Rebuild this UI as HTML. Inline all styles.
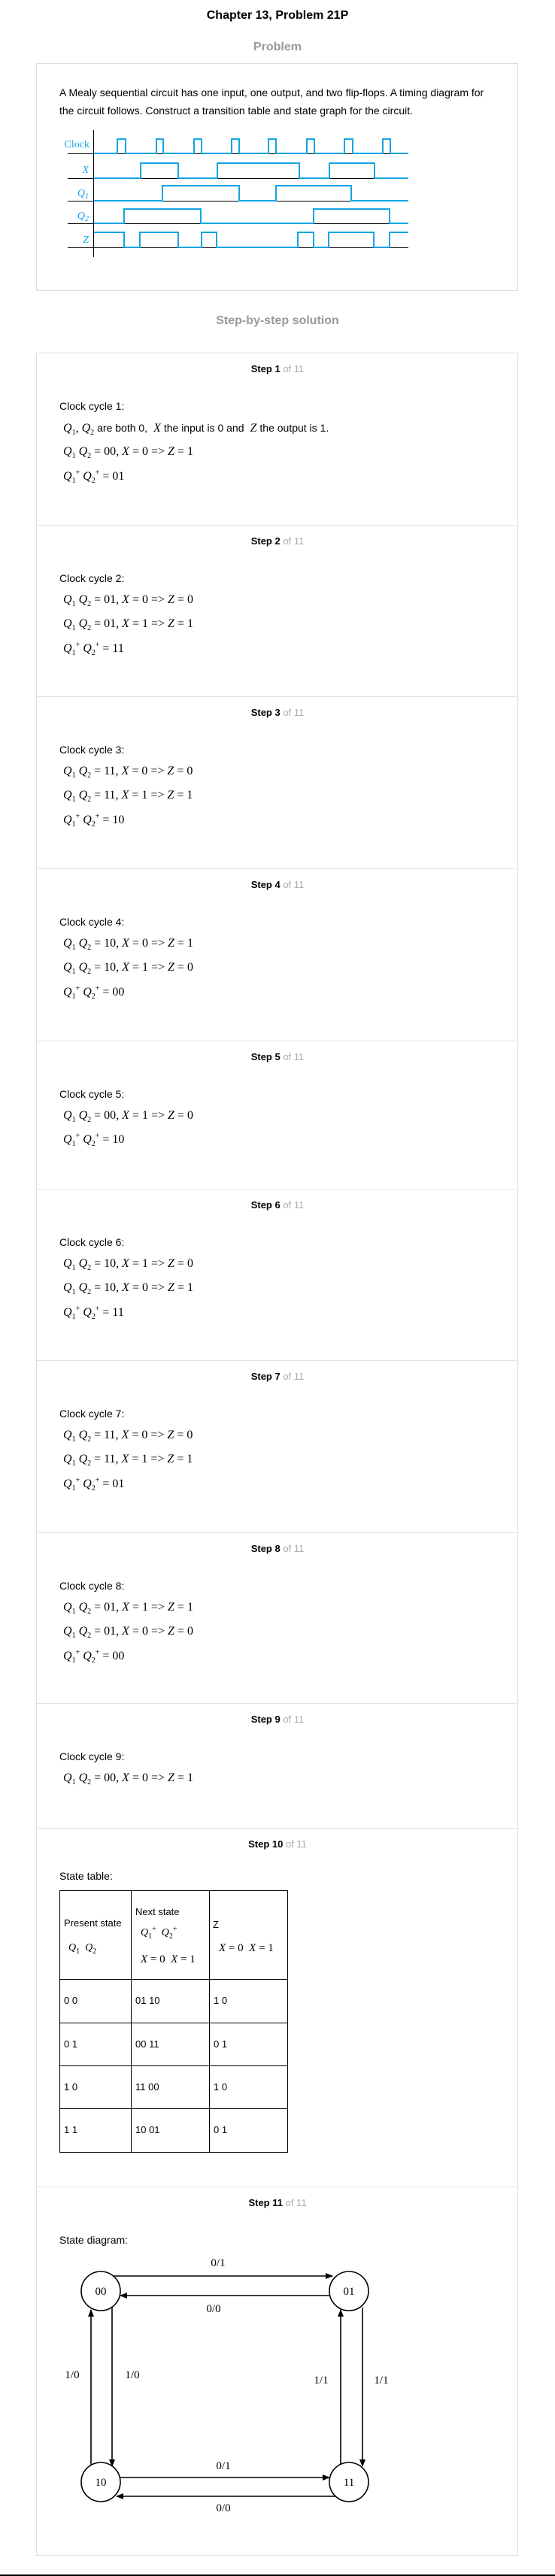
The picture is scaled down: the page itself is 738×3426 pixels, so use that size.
<!DOCTYPE html>
<html><head><meta charset="utf-8">
<style>
html,body{margin:0;padding:0;background:#fff;}
body{width:738px;height:3426px;position:relative;overflow:hidden;font-family:"Liberation Sans",Arial,sans-serif;color:#000;}
.a{position:absolute;white-space:nowrap;line-height:18px;}
.h{font-weight:bold;font-size:16px;left:0;width:738px;text-align:center;}
.st{font-weight:bold;font-size:13px;left:0;width:738px;text-align:center;}
.st span{font-weight:normal;color:#aaa;}
.t{font-size:14px;left:79px;}
.m{font-family:"Liberation Serif","Times New Roman",serif;font-size:16px;left:84px;}
.m i{font-style:italic;}
.m sub,.m sup{font-size:10px;line-height:0;}
.box{position:absolute;border:1px solid #ddd;box-sizing:border-box;}
.sep{position:absolute;left:49px;width:638px;height:1px;background:#e2e2e2;}
.tc{font-size:13px;}
.vl{position:absolute;width:1px;background:#000;}
.hl{position:absolute;height:1px;background:#000;}
</style></head><body>

<div class="a h" style="top:12px;">Chapter 13, Problem 21P</div>
<div class="a h" style="top:54px;color:#999;">Problem</div>
<div class="box" style="left:48px;top:84px;width:641px;height:303px;"></div>
<div class="a t" style="top:114px;font-size:14px;">A Mealy sequential circuit has one input, one output, and two flip-flops. A timing diagram for</div>
<div class="a t" style="top:138px;font-size:14px;">the circuit follows. Construct a transition table and state graph for the circuit.</div>

<svg style="position:absolute;left:0;top:0;" width="738" height="400">
<g font-family="Liberation Serif,serif" font-size="14" fill="#12a5e4" text-anchor="end">
<text x="119" y="196">Clock</text>
<text x="118" y="230" font-style="italic">X</text>
<text x="118" y="261" font-style="italic">Q<tspan font-size="10" dy="3">1</tspan></text>
<text x="118" y="291" font-style="italic">Q<tspan font-size="10" dy="3">2</tspan></text>
<text x="118" y="323" font-style="italic">Z</text>
</g>
<g stroke="#000" stroke-width="1">
<line x1="124.5" y1="173" x2="124.5" y2="342"/>
<line x1="90" y1="204.5" x2="543" y2="204.5"/>
<line x1="90" y1="237.5" x2="543" y2="237.5"/>
<line x1="90" y1="267.5" x2="543" y2="267.5"/>
<line x1="90" y1="297.5" x2="543" y2="297.5"/>
<line x1="90" y1="329.5" x2="543" y2="329.5"/>
</g>
<g stroke="#12a5e4" stroke-width="2" fill="none">
<path d="M125 204 H156 V185 H167 V204 H208 V185 H217 V204 H258 V185 H268 V204 H308 V185 H318 V204 H357 V185 H367 V204 H408 V185 H418 V204 H458 V185 H469 V204 H509 V185 H519 V204 H543"/>
<path d="M125 237 H187 V217 H237 V237 H289 V217 H398 V237 H438 V217 H498 V237 H543"/>
<path d="M125 267 H216 V247 H318 V267 H367 V247 H467 V267 H543"/>
<path d="M125 297 H165 V278 H267 V297 H417 V278 H518 V297 H543"/>
<path d="M125 309 H165 V329 H186 V309 H237 V329 H268 V309 H288 V329 H396 V309 H417 V329 H437 V309 H497 V329 H518 V309 H543"/>
</g>
</svg>

<div class="a h" style="top:418px;color:#999;">Step-by-step solution</div>
<div class="box" style="left:48px;top:469px;width:641px;height:2930px;"></div>

<!-- Step 1 -->
<div class="a st" style="top:482px;">Step 1 <span>of 11</span></div>
<div class="a t" style="top:531px;">Clock cycle 1:</div>
<div class="a m" style="top:560px;"><i>Q</i><sub>1</sub>, <i>Q</i><sub>2</sub> <span style="font-family:'Liberation Sans',sans-serif;font-size:14px;">are both 0,</span> &nbsp;<i>X</i> <span style="font-family:'Liberation Sans',sans-serif;font-size:14px;">the input is 0 and</span> &nbsp;<i>Z</i> <span style="font-family:'Liberation Sans',sans-serif;font-size:14px;">the output is 1.</span></div>
<div class="a m" style="top:592px;"><i>Q</i><sub>1</sub> <i>Q</i><sub>2</sub> = 00, <i>X</i> = 0 =&gt; <i>Z</i> = 1</div>
<div class="a m" style="top:625px;"><i>Q</i><sub>1</sub><sup>+</sup> <i>Q</i><sub>2</sub><sup>+</sup> = 01</div>

<div class="sep" style="top:698px;"></div>
<!-- Step 2 -->
<div class="a st" style="top:711px;">Step 2 <span>of 11</span></div>
<div class="a t" style="top:760px;">Clock cycle 2:</div>
<div class="a m" style="top:789px;"><i>Q</i><sub>1</sub> <i>Q</i><sub>2</sub> = 01, <i>X</i> = 0 =&gt; <i>Z</i> = 0</div>
<div class="a m" style="top:821px;"><i>Q</i><sub>1</sub> <i>Q</i><sub>2</sub> = 01, <i>X</i> = 1 =&gt; <i>Z</i> = 1</div>
<div class="a m" style="top:854px;"><i>Q</i><sub>1</sub><sup>+</sup> <i>Q</i><sub>2</sub><sup>+</sup> = 11</div>

<div class="sep" style="top:926px;"></div>
<!-- Step 3 -->
<div class="a st" style="top:939px;">Step 3 <span>of 11</span></div>
<div class="a t" style="top:988px;">Clock cycle 3:</div>
<div class="a m" style="top:1017px;"><i>Q</i><sub>1</sub> <i>Q</i><sub>2</sub> = 11, <i>X</i> = 0 =&gt; <i>Z</i> = 0</div>
<div class="a m" style="top:1049px;"><i>Q</i><sub>1</sub> <i>Q</i><sub>2</sub> = 11, <i>X</i> = 1 =&gt; <i>Z</i> = 1</div>
<div class="a m" style="top:1082px;"><i>Q</i><sub>1</sub><sup>+</sup> <i>Q</i><sub>2</sub><sup>+</sup> = 10</div>

<div class="sep" style="top:1155px;"></div>
<!-- Step 4 -->
<div class="a st" style="top:1168px;">Step 4 <span>of 11</span></div>
<div class="a t" style="top:1217px;">Clock cycle 4:</div>
<div class="a m" style="top:1246px;"><i>Q</i><sub>1</sub> <i>Q</i><sub>2</sub> = 10, <i>X</i> = 0 =&gt; <i>Z</i> = 1</div>
<div class="a m" style="top:1278px;"><i>Q</i><sub>1</sub> <i>Q</i><sub>2</sub> = 10, <i>X</i> = 1 =&gt; <i>Z</i> = 0</div>
<div class="a m" style="top:1311px;"><i>Q</i><sub>1</sub><sup>+</sup> <i>Q</i><sub>2</sub><sup>+</sup> = 00</div>

<div class="sep" style="top:1384px;"></div>
<!-- Step 5 -->
<div class="a st" style="top:1397px;">Step 5 <span>of 11</span></div>
<div class="a t" style="top:1446px;">Clock cycle 5:</div>
<div class="a m" style="top:1475px;"><i>Q</i><sub>1</sub> <i>Q</i><sub>2</sub> = 00, <i>X</i> = 1 =&gt; <i>Z</i> = 0</div>
<div class="a m" style="top:1507px;"><i>Q</i><sub>1</sub><sup>+</sup> <i>Q</i><sub>2</sub><sup>+</sup> = 10</div>

<div class="sep" style="top:1581px;"></div>
<!-- Step 6 -->
<div class="a st" style="top:1594px;">Step 6 <span>of 11</span></div>
<div class="a t" style="top:1643px;">Clock cycle 6:</div>
<div class="a m" style="top:1672px;"><i>Q</i><sub>1</sub> <i>Q</i><sub>2</sub> = 10, <i>X</i> = 1 =&gt; <i>Z</i> = 0</div>
<div class="a m" style="top:1704px;"><i>Q</i><sub>1</sub> <i>Q</i><sub>2</sub> = 10, <i>X</i> = 0 =&gt; <i>Z</i> = 1</div>
<div class="a m" style="top:1737px;"><i>Q</i><sub>1</sub><sup>+</sup> <i>Q</i><sub>2</sub><sup>+</sup> = 11</div>

<div class="sep" style="top:1809px;"></div>
<!-- Step 7 -->
<div class="a st" style="top:1822px;">Step 7 <span>of 11</span></div>
<div class="a t" style="top:1871px;">Clock cycle 7:</div>
<div class="a m" style="top:1900px;"><i>Q</i><sub>1</sub> <i>Q</i><sub>2</sub> = 11, <i>X</i> = 0 =&gt; <i>Z</i> = 0</div>
<div class="a m" style="top:1932px;"><i>Q</i><sub>1</sub> <i>Q</i><sub>2</sub> = 11, <i>X</i> = 1 =&gt; <i>Z</i> = 1</div>
<div class="a m" style="top:1965px;"><i>Q</i><sub>1</sub><sup>+</sup> <i>Q</i><sub>2</sub><sup>+</sup> = 01</div>

<div class="sep" style="top:2038px;"></div>
<!-- Step 8 -->
<div class="a st" style="top:2051px;">Step 8 <span>of 11</span></div>
<div class="a t" style="top:2100px;">Clock cycle 8:</div>
<div class="a m" style="top:2129px;"><i>Q</i><sub>1</sub> <i>Q</i><sub>2</sub> = 01, <i>X</i> = 1 =&gt; <i>Z</i> = 1</div>
<div class="a m" style="top:2161px;"><i>Q</i><sub>1</sub> <i>Q</i><sub>2</sub> = 01, <i>X</i> = 0 =&gt; <i>Z</i> = 0</div>
<div class="a m" style="top:2194px;"><i>Q</i><sub>1</sub><sup>+</sup> <i>Q</i><sub>2</sub><sup>+</sup> = 00</div>

<div class="sep" style="top:2265px;"></div>
<!-- Step 9 -->
<div class="a st" style="top:2278px;">Step 9 <span>of 11</span></div>
<div class="a t" style="top:2327px;">Clock cycle 9:</div>
<div class="a m" style="top:2356px;"><i>Q</i><sub>1</sub> <i>Q</i><sub>2</sub> = 00, <i>X</i> = 0 =&gt; <i>Z</i> = 1</div>

<div class="sep" style="top:2431px;"></div>
<!-- Step 10 -->
<div class="a st" style="top:2444px;">Step 10 <span>of 11</span></div>
<div class="a t" style="top:2486px;">State table:</div>

<div class="hl" style="left:79px;width:304px;top:2514px;"></div>
<div class="hl" style="left:79px;width:304px;top:2632px;"></div>
<div class="hl" style="left:79px;width:304px;top:2690px;"></div>
<div class="hl" style="left:79px;width:304px;top:2747px;"></div>
<div class="hl" style="left:79px;width:304px;top:2804px;"></div>
<div class="hl" style="left:79px;width:304px;top:2862px;"></div>
<div class="vl" style="left:79px;top:2514px;height:349px;"></div>
<div class="vl" style="left:174px;top:2514px;height:349px;"></div>
<div class="vl" style="left:278px;top:2514px;height:349px;"></div>
<div class="vl" style="left:382px;top:2514px;height:349px;"></div>

<div class="a tc" style="left:85px;top:2549px;">Present state</div>
<div class="a m" style="left:91px;top:2582px;font-size:14px;"><i>Q</i><sub>1</sub>&nbsp; <i>Q</i><sub>2</sub></div>
<div class="a tc" style="left:180px;top:2534px;">Next state</div>
<div class="a m" style="left:187px;top:2562px;font-size:14px;"><i>Q</i><sub>1</sub><sup>+</sup>&nbsp; <i>Q</i><sub>2</sub><sup>+</sup></div>
<div class="a m" style="left:187px;top:2597px;font-size:15px;"><i>X</i> = 0 &nbsp;<i>X</i> = 1</div>
<div class="a tc" style="left:283px;top:2551px;">Z</div>
<div class="a m" style="left:291px;top:2582px;font-size:15px;"><i>X</i> = 0 &nbsp;<i>X</i> = 1</div>

<div class="a tc" style="left:85px;top:2652px;">0 0</div>
<div class="a tc" style="left:180px;top:2652px;">01 10</div>
<div class="a tc" style="left:284px;top:2652px;">1 0</div>
<div class="a tc" style="left:85px;top:2710px;">0 1</div>
<div class="a tc" style="left:180px;top:2710px;">00 11</div>
<div class="a tc" style="left:284px;top:2710px;">0 1</div>
<div class="a tc" style="left:85px;top:2767px;">1 0</div>
<div class="a tc" style="left:180px;top:2767px;">11 00</div>
<div class="a tc" style="left:284px;top:2767px;">1 0</div>
<div class="a tc" style="left:85px;top:2824px;">1 1</div>
<div class="a tc" style="left:180px;top:2824px;">10 01</div>
<div class="a tc" style="left:284px;top:2824px;">0 1</div>

<div class="sep" style="top:2908px;"></div>
<!-- Step 11 -->
<div class="a st" style="top:2921px;">Step 11 <span>of 11</span></div>
<div class="a t" style="top:2970px;">State diagram:</div>

<svg style="position:absolute;left:0;top:2900px;" width="738" height="500">
<defs>
<marker id="ar" markerWidth="10" markerHeight="8" refX="9" refY="4" orient="auto" markerUnits="userSpaceOnUse">
<path d="M0 0 L10 4 L0 8 Z" fill="#000"/>
</marker>
</defs>
<g stroke="#000" stroke-width="1.6" fill="none">
<circle cx="134" cy="147" r="26"/>
<circle cx="464" cy="147" r="26"/>
<circle cx="134" cy="401" r="26"/>
<circle cx="464" cy="401" r="26"/>
<line x1="150" y1="127" x2="442" y2="127" marker-end="url(#ar)"/>
<line x1="439" y1="153" x2="160" y2="153" marker-end="url(#ar)"/>
<line x1="121" y1="378" x2="121" y2="172" marker-end="url(#ar)"/>
<line x1="149" y1="169" x2="149" y2="380" marker-end="url(#ar)"/>
<line x1="453" y1="378" x2="453" y2="172" marker-end="url(#ar)"/>
<line x1="482" y1="169" x2="482" y2="380" marker-end="url(#ar)"/>
<line x1="160" y1="395" x2="438" y2="395" marker-end="url(#ar)"/>
<line x1="447" y1="420" x2="155" y2="420" marker-end="url(#ar)"/>
</g>
<g font-family="Liberation Serif,serif" font-size="15" text-anchor="middle" fill="#000">
<text x="134" y="152">00</text>
<text x="464" y="152">01</text>
<text x="134" y="406">10</text>
<text x="464" y="406">11</text>
<text x="290" y="114">0/1</text>
<text x="284" y="175">0/0</text>
<text x="96" y="263">1/0</text>
<text x="176" y="263">1/0</text>
<text x="427" y="270">1/1</text>
<text x="507" y="270">1/1</text>
<text x="297" y="384">0/1</text>
<text x="297" y="440">0/0</text>
</g>
</svg>

<div style="position:absolute;left:0;top:3424px;width:738px;height:2px;background:#000;"></div>
</body></html>
